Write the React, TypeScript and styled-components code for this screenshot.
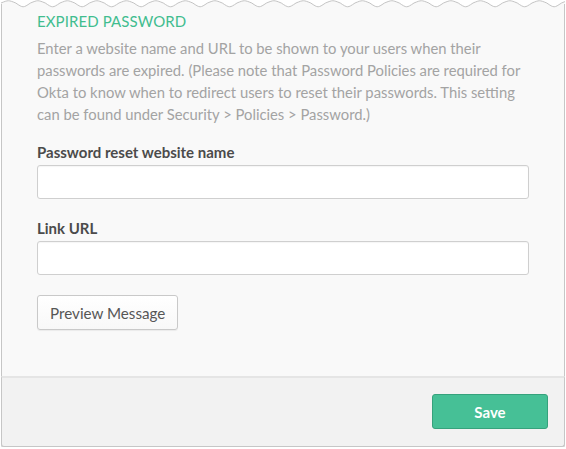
import React from "react";
import styled, { createGlobalStyle } from "styled-components";

const Global = createGlobalStyle`
  html, body { margin: 0; padding: 0; background: #ffffff; }
  body { font-family: "Lato", "Open Sans", sans-serif; }
  * { box-sizing: border-box; }
`;

const Card = styled.div`
  width: 564px;
  height: 447px;
  margin-left: 1px;
  display: flex;
  flex-direction: column;
`;

const Body = styled.div`
  flex: 1;
  background: #f9f9f9;
  border-left: 1px solid #c6c6c6;
  border-right: 1px solid #c6c6c6;
  padding: 1px 35px 0 35px;
  display: flex;
  flex-direction: column;
`;

const Title = styled.h2`
  margin: 0;
  font-family: "Lato", "Open Sans", sans-serif;
  font-weight: 400;
  font-size: 15px;
  letter-spacing: 0.1px;
  color: #41bd8f;
  line-height: 20px;
`;

const Desc = styled.p`
  margin: 6px 0 0 0;
  font-family: "Lato", "Open Sans", sans-serif;
  font-size: 14.8px;
  line-height: 22px;
  color: #a3a3a3;
  width: 500px;
`;

const Field = styled.div<{ $top: number }>`
  display: flex;
  flex-direction: column;
  margin-top: ${(p) => p.$top}px;
`;

const Label = styled.label`
  font-family: "Lato", "Open Sans", sans-serif;
  font-weight: 700;
  font-size: 15px;
  color: #4b4b4b;
  line-height: 20px;
`;

const Input = styled.input`
  margin-top: 3px;
  width: 492px;
  height: 34px;
  background: #ffffff;
  border: 1px solid #cfcfcf;
  border-radius: 3px;
  box-shadow: inset 0 1px 1px rgba(0, 0, 0, 0.04);
  outline: none;
`;

const Button = styled.button`
  align-self: flex-start;
  margin-top: 20px;
  height: 35px;
  padding: 0 12px;
  background: linear-gradient(#ffffff, #f8f8f8);
  border: 1px solid #c9c9c9;
  border-radius: 3px;
  box-shadow: 0 1px 1px rgba(0, 0, 0, 0.06);
  font-family: "Lato", "Open Sans", sans-serif;
  font-size: 15.2px;
  color: #565656;
`;

const Footer = styled.div`
  height: 71px;
  background: #f2f2f2;
  border: 1px solid #c6c6c6;
  border-top: 2px solid #e5e5e5;
  border-radius: 0 0 3px 3px;
  box-shadow: 0 1px 0 #d6d6d6;
  display: flex;
  justify-content: flex-end;
  align-items: flex-start;
  padding: 16px 16px 0 0;
`;

const Save = styled.button`
  width: 116px;
  height: 35px;
  background: #46c096;
  border: 1px solid #36a27c;
  border-radius: 3px;
  font-family: "Lato", "Open Sans", sans-serif;
  font-weight: 700;
  font-size: 15px;
  color: #ffffff;
`;

const WaveSvg = styled.svg`
  display: block;
  flex-shrink: 0;
`;

function Wave() {
  const w = 564;
  const period = 29.5;
  let d = "M0 2";
  for (let x = 0; x < w + period; x += period) {
    d += ` C${x + period * 0.25} -1 ${x + period * 0.25} -1 ${x + period * 0.5} 2`;
    d += ` C${x + period * 0.75} 7 ${x + period * 0.75} 7 ${x + period} 2`;
  }
  return (
    <WaveSvg width={w} height={10} viewBox={`0 -1 ${w} 10`}>
      <path d={`${d} L${w + period * 2} 10 L0 10 Z`} fill="#f9f9f9" />
      <path d={d} fill="none" stroke="#c4c4c4" strokeWidth={1} />
      <line x1={0.5} y1={3} x2={0.5} y2={10} stroke="#c6c6c6" />
      <line x1={w - 0.5} y1={3} x2={w - 0.5} y2={10} stroke="#c6c6c6" />
    </WaveSvg>
  );
}

export default function App() {
  return (
    <>
      <Global />
      <Card>
        <Wave />
        <Body>
          <Title>EXPIRED PASSWORD</Title>
          <Desc>
            Enter a website name and URL to be shown to your users when their
            passwords are expired. (Please note that Password Policies are
            required for Okta to know when to redirect users to reset their
            passwords. This setting can be found under Security &gt; Policies
            &gt; Password.)
          </Desc>
          <Field $top={17}>
            <Label>Password reset website name</Label>
            <Input type="text" />
          </Field>
          <Field $top={19}>
            <Label>Link URL</Label>
            <Input type="text" />
          </Field>
          <Button>Preview Message</Button>
        </Body>
        <Footer>
          <Save>Save</Save>
        </Footer>
      </Card>
    </>
  );
}
